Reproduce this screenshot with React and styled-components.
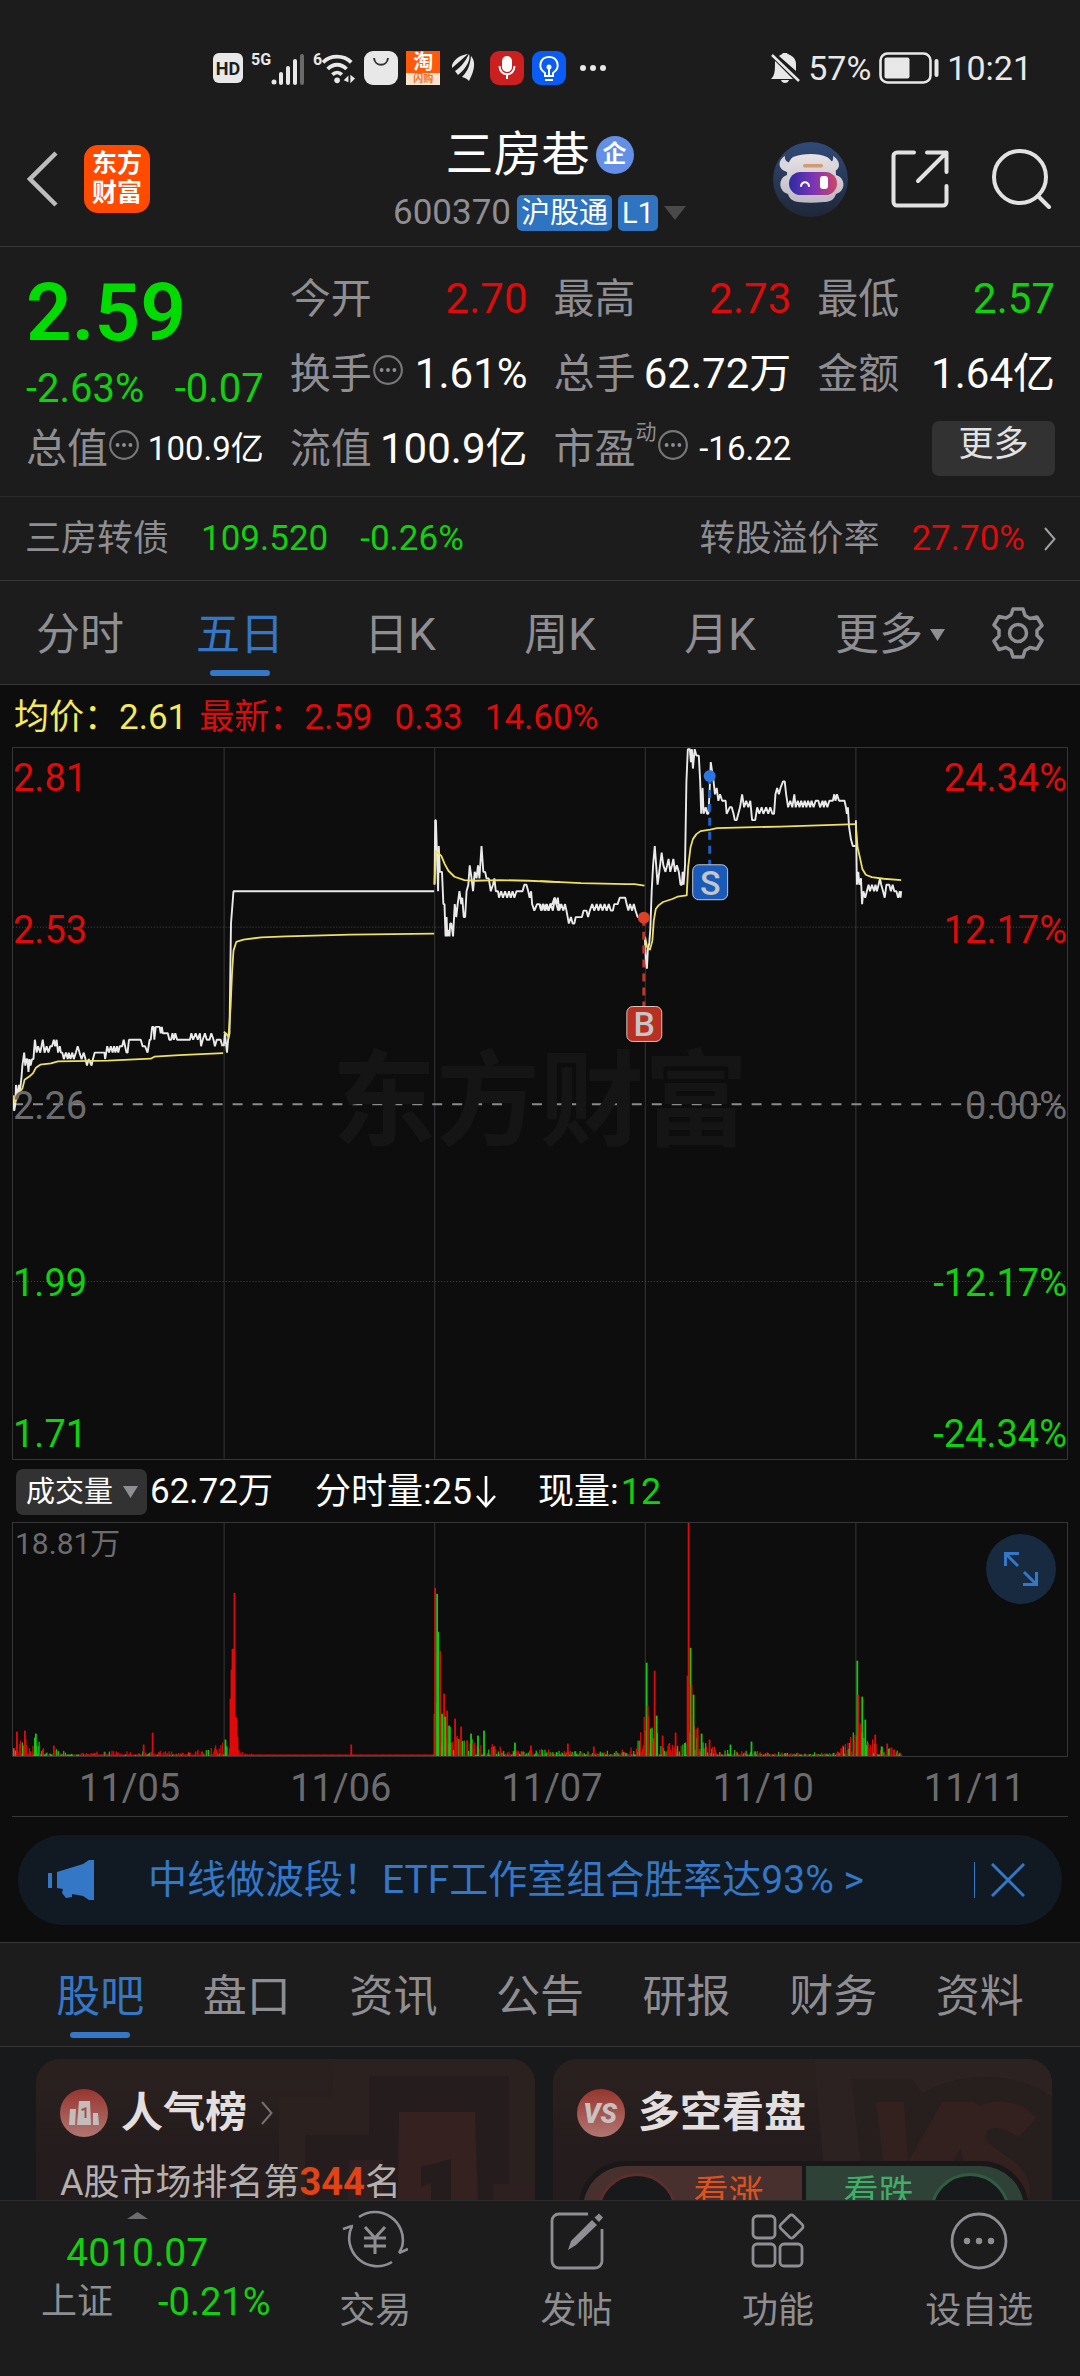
import React from 'react';
import styled, { createGlobalStyle } from 'styled-components';

const c = {
  bg: '#1c1c1c',
  chart: '#0d0d0d',
  line: '#363638',
  red: '#dd0b0b',
  green: '#10d010',
  grey: '#8e8e93',
  dim: '#6c6c6e',
  blue: '#3477c6',
  yellow: '#f6ea5c',
  light: '#e2e2e2',
};

const Global = createGlobalStyle`
  * { box-sizing: border-box; }
  html, body { margin: 0; background: ${c.bg}; }
  body {
    font-family: Roboto, "Noto Sans CJK SC", sans-serif;
    color: #fff;
  }
  button, select {
    font: inherit;
    color: inherit;
    background: none;
    border: 0;
    padding: 0;
    cursor: pointer;
  }
  a { color: inherit; text-decoration: none; }
  h1, h2, p, dl, dd, dt, ul { margin: 0; padding: 0; font-weight: 400; }
  svg { display: block; flex: none; }
`;

const Page = styled.div`
  height: 100vh;
  display: flex;
  flex-direction: column;
  background: ${c.bg};
  overflow: hidden;
`;

/* ---------- status bar ---------- */

const StatusBar = styled.div`
  flex: none;
  height: 118px;
  padding: 18px 48px 0 213px;
  display: flex;
  align-items: center;
  justify-content: space-between;
  color: #e8e8e8;
`;
const StatusGroup = styled.div`
  display: flex;
  align-items: center;
  gap: ${(p) => p.$gap}px;
  font-size: 34px;
  line-height: 40px;
`;
const HdBadge = styled.span`
  width: 30px;
  height: 30px;
  border-radius: 6px;
  background: #e8e8e8;
  color: ${c.bg};
  font-size: 18px;
  line-height: 31px;
  font-weight: 700;
  text-align: center;
`;
const Signal = styled.span`
  display: flex;
  align-items: flex-start;
  font-size: 16px;
  line-height: 16px;
  font-weight: 700;
  svg { margin-top: 1px; }
`;
const AppTile = styled.span`
  width: 34px;
  height: 34px;
  border-radius: ${(p) => p.$radius}px;
  background: ${(p) => p.$bg};
  display: flex;
  flex-direction: column;
  align-items: center;
  justify-content: center;
  overflow: hidden;
`;
const TileTop = styled.span`
  font-size: 20px;
  line-height: 22px;
  font-weight: 700;
  color: #fff;
`;
const TileFoot = styled.span`
  width: 100%;
  background: #fbe3cc;
  color: #f2701c;
  font-size: 10px;
  line-height: 12px;
  font-weight: 700;
  text-align: center;
`;

/* ---------- header ---------- */

const Header = styled.header`
  flex: none;
  display: grid;
  grid-template-columns: 1fr auto 1fr;
  align-items: center;
  padding: 9px 28px 15px 27px;
  border-bottom: 1px solid ${c.line};
`;
const HeaderSide = styled.div`
  display: flex;
  align-items: center;
  justify-content: ${(p) => (p.$end ? 'flex-end' : 'flex-start')};
  gap: ${(p) => (p.$end ? 43 : 26)}px;
`;
const IconButton = styled.button`
  display: flex;
  align-items: center;
  justify-content: center;
`;
const Logo = styled.a`
  width: 66px;
  height: 68px;
  border-radius: 14px;
  background: #ff4a00;
  color: #fff;
  font-size: 25px;
  line-height: 29px;
  font-weight: 700;
  text-align: center;
  padding-top: 4px;
`;
const HeaderMiddle = styled.div`
  display: flex;
  flex-direction: column;
  align-items: center;
  gap: 12px;
`;
const TitleRow = styled.div`
  display: flex;
  align-items: center;
  gap: 6px;
  height: 56px;
`;
const StockName = styled.h1`
  font-size: 48px;
  line-height: 56px;
`;
const CorpBadge = styled.span`
  width: 38px;
  height: 38px;
  border-radius: 50%;
  background: #6390e6;
  font-size: 24px;
  line-height: 36px;
  font-weight: 700;
  text-align: center;
`;
const CodeRow = styled.div`
  display: flex;
  align-items: center;
  gap: 6px;
  color: ${c.grey};
  font-size: 35px;
  line-height: 36px;
`;
const Tag = styled.span`
  height: 36px;
  padding: 0 4px;
  border-radius: 5px;
  background: #2f74c0;
  color: #fff;
  font-size: 29px;
  line-height: 36px;
`;

/* ---------- quote ---------- */

const Quote = styled.section`
  flex: none;
  display: grid;
  grid-template-columns: repeat(4, 1fr);
  grid-template-rows: repeat(3, 75px);
  column-gap: 26px;
  padding: 14px 25px 10px 26px;
  border-bottom: 1px solid #2a2a2c;
`;
const PriceCell = styled.div`
  grid-row: 1 / span 2;
  display: flex;
  flex-direction: column;
  justify-content: space-between;
  color: ${c.green};
`;
const Price = styled.strong`
  color: #00dc00;
  font-size: 80px;
  line-height: 104px;
  font-weight: 600;
`;
const Change = styled.div`
  display: flex;
  justify-content: space-between;
  font-size: 40px;
  line-height: 44px;
`;
const Stat = styled.div`
  display: flex;
  align-items: center;
  justify-content: space-between;
  line-height: 50px;
  white-space: nowrap;
`;
const StatName = styled.span`
  display: flex;
  align-items: center;
  color: ${c.grey};
  font-size: 41px;
  svg { margin-bottom: 8px; }
`;
const StatValue = styled.span`
  color: ${(p) => p.$color || '#fff'};
  font-size: ${(p) => (p.$small ? 33 : 42)}px;
`;
const Sup = styled.sup`
  align-self: flex-start;
  margin-top: -4px;
  font-size: 21px;
  line-height: 24px;
`;
const MoreButton = styled.button`
  justify-self: end;
  align-self: center;
  width: 123px;
  height: 55px;
  padding-bottom: 7px;
  border-radius: 7px;
  background: #323232;
  color: ${c.light};
  font-size: 35px;
  line-height: 48px;
`;

const BondRow = styled.a`
  flex: none;
  height: 84px;
  display: flex;
  align-items: center;
  gap: 32px;
  padding: 0 24px 0 25px;
  border-bottom: 1px solid ${c.line};
  font-size: 36px;
  line-height: 44px;
  color: ${c.grey};
`;
const Figure = styled.span`
  color: ${(p) => p.$color};
  font-size: 35px;
`;
const Tone = styled.span`
  color: ${(p) => p.$color};
`;
const Push = styled.span`
  margin-left: auto;
`;
const BondEnd = styled.span`
  display: flex;
  align-items: center;
  gap: 19px;
  color: ${c.red};
  font-size: 35px;
`;

/* ---------- tabs ---------- */

const Tabs = styled.nav`
  flex: none;
  display: flex;
  height: ${(p) => p.$height}px;
  padding: 0 ${(p) => p.$pad}px;
  border-bottom: 1px solid ${c.line};
`;
const Tab = styled.button`
  flex: ${(p) => p.$grow || 160} 1 0;
  display: flex;
  flex-direction: column;
  align-items: center;
  justify-content: flex-end;
  gap: 5px;
  padding-bottom: 8px;
  font-size: 44px;
  line-height: 60px;
  color: ${(p) => (p.$on ? c.blue : c.grey)};
  &::after {
    content: '';
    width: 60px;
    height: 6px;
    border-radius: 3px;
    background: ${(p) => (p.$on ? c.blue : 'transparent')};
  }
`;
const TabText = styled.span`
  display: flex;
  align-items: center;
  gap: 7px;
`;
const GearButton = styled(IconButton)`
  flex: none;
  width: 100px;
  padding-right: 24px;
`;

/* ---------- charts ---------- */

const Charts = styled.section`
  flex: none;
  background: ${c.chart};
  padding: 0 12px;
`;
const Legend = styled.div`
  display: flex;
  align-items: center;
  height: 62px;
  font-size: 35px;
  line-height: 44px;
  padding: 4px 2px 0;
  gap: 12px;
`;
const LegendPart = styled.span`
  display: flex;
  gap: 22px;
  color: ${(p) => p.$color};
`;
const Plot = styled.div`
  position: relative;
  border: 1px solid ${c.line};
`;
const PlotSvg = styled.svg`
  width: 100%;
  height: auto;
`;
const AxisLabel = styled.span`
  position: absolute;
  top: ${(p) => p.$top}%;
  ${(p) => (p.$right ? 'right: 0' : 'left: 0')};
  margin-top: -22px;
  font-size: 38px;
  line-height: 44px;
  color: ${(p) => p.$color};
`;
const Watermark = styled.span`
  position: absolute;
  top: 50%;
  left: 0;
  right: 0;
  margin-top: -60px;
  text-align: center;
  font-size: 104px;
  line-height: 120px;
  font-weight: 700;
  color: #151515;
`;
const VolumeBar = styled.div`
  display: flex;
  align-items: center;
  height: 62px;
  padding: 2px 0 0 4px;
  font-size: 36px;
  line-height: 46px;
`;
const Picker = styled.label`
  position: relative;
  display: flex;
  margin-right: 3px;
  svg {
    position: absolute;
    right: 9px;
    top: 17px;
    pointer-events: none;
  }
`;
const PickerSelect = styled.select`
  appearance: none;
  width: 131px;
  height: 46px;
  padding-left: 10px;
  border-radius: 7px;
  background: #323232;
  font-size: 29px;
`;
const VolumeItem = styled.span`
  margin-right: 42px;
  display: flex;
  align-items: center;
  gap: 2px;
`;
const Total = styled(VolumeItem)`
  font-size: 35px;
`;
const PeakVolume = styled.span`
  position: absolute;
  left: 2px;
  top: 3px;
  font-size: 30px;
  line-height: 36px;
  color: ${c.dim};
`;
const ExpandButton = styled(IconButton)`
  position: absolute;
  right: 11px;
  top: 11px;
  width: 70px;
  height: 70px;
  border-radius: 50%;
  background: #172a40;
`;
const DatesWrap = styled.div`
  border-bottom: 1px solid ${c.line};
`;
const Dates = styled.div`
  display: grid;
  grid-template-columns: repeat(5, 1fr);
  height: 59px;
  margin: 0 -12px 0 12px;
  padding-top: 5px;
  font-size: 38px;
  line-height: 52px;
  text-align: center;
  color: ${c.dim};
`;
const BannerWrap = styled.div`
  flex: none;
  background: ${c.chart};
  padding: 18px 18px 17px;
  border-bottom: 1px solid ${c.line};
`;
const Banner = styled.div`
  height: 90px;
  border-radius: 45px;
  background: #111a22;
  color: ${c.blue};
  display: flex;
  align-items: center;
  padding: 0 37px 0 30px;
  font-size: 39px;
  line-height: 48px;
`;
const BannerLink = styled.a`
  flex: 1;
  margin-left: 54px;
  white-space: nowrap;
`;
const CloseButton = styled(IconButton)`
  border-left: 1px solid ${c.blue};
  padding-left: 16px;
  height: 36px;
`;

/* ---------- cards ---------- */

const Cards = styled.section`
  flex: 1;
  min-height: 0;
  overflow: hidden;
  background: #18191b;
  display: grid;
  grid-template-columns: 1fr 1fr;
  gap: 18px;
  align-items: start;
  padding: 12px 28px 0 36px;
`;
const Card = styled.article`
  position: relative;
  height: 260px;
  border-radius: 24px;
  background: linear-gradient(#2a211f, #241c1d 40%, #241c1d);
  padding: 26px 24px;
  overflow: hidden;
`;
const CardArt = styled.svg`
  position: absolute;
  right: 0;
  top: 0;
`;
const CardHead = styled.div`
  position: relative;
  display: flex;
  align-items: center;
  gap: 13px;
  height: 56px;
`;
const CardTitle = styled.h2`
  font-size: 42px;
  line-height: 56px;
  font-weight: 700;
  color: #e3dfdf;
`;
const CardText = styled.p`
  position: relative;
  margin-top: 23px;
  font-size: 36px;
  line-height: 36px;
  color: #b5b0b0;
  b { color: #e04416; font-size: 38px; }
`;
const Versus = styled.div`
  position: relative;
  margin: 20px 0 0 1px;
  width: 451px;
  max-width: 100%;
  height: 96px;
  border: 5px solid #1a1718;
  border-radius: 48px;
  background: #1a1718;
  display: flex;
  gap: 4px;
  overflow: hidden;
`;
const Side = styled.button`
  flex: 1;
  display: flex;
  align-items: flex-start;
  justify-content: space-between;
  flex-direction: ${(p) => (p.$flip ? 'row-reverse' : 'row')};
  padding: 7px ${(p) => (p.$flip ? 14 : 38)}px 0 ${(p) => (p.$flip ? 38 : 14)}px;
  background: ${(p) => p.$bg};
  color: ${(p) => p.$color};
  font-size: 35px;
  line-height: 42px;
  &::before {
    content: '';
    width: 74px;
    height: 74px;
    border-radius: 50%;
    background: #18191b;
    border: 3px solid ${(p) => p.$ring};
  }
`;

/* ---------- bottom bar ---------- */

const BottomBar = styled.nav`
  flex: none;
  display: flex;
  height: 176px;
  border-top: 1px solid #2c2c2e;
  background: ${c.bg};
`;
const IndexCell = styled.a`
  flex: 274 1 0;
  display: flex;
  flex-direction: column;
  align-items: center;
  padding-top: 11px;
  color: ${c.green};
  font-size: 39px;
  line-height: 49px;
`;
const IndexValue = styled.span`
  margin-top: 10px;
`;
const IndexRow = styled.span`
  align-self: stretch;
  display: flex;
  justify-content: space-between;
  padding: 0 4px 0 41px;
  font-size: 38px;
  span { color: ${c.grey}; font-size: 36px; }
`;
const NavItem = styled.button`
  flex: 201 1 0;
  display: flex;
  flex-direction: column;
  align-items: center;
  gap: 17px;
  padding-top: 9px;
  color: ${c.grey};
  font-size: 36px;
  line-height: 48px;
`;

/* ---------- data ---------- */

const CHART_W = 1056;
const CHART_H = 712;
const TICK = 6.47;

// Each entry is "x:price" with the price in cents above the previous close of 2.26.
const priceEarly = [
  '33:1 37:-1 40:0 42:3 46:1 50:3 53:2 57:4 60:6 65:8 68:6 71:7 74:7 77:5 80:7 83:6 87:7 91:7 95:10 100:8 104:9 110:8 117:10 122:8 128:9 133:8 138:9 143:9 148:10 152:9 156:10 160:8 165:9 168:8 172:8 176:7 182:8 187:7 190:8 195:7 200:8 204:7 210:8 215:9 220:8 226:7 232:8 237:7 241:6 246:7 254:6 258:7 263:8 290:8 292:7 298:9 303:8 308:9 313:8 317:9 321:8 325:9 329:8 333:9 340:9 344:10 348:9 352:8 355:8 359:10 392:10 397:9 404:9 411:8 417:10 420:10 424:12 428:12 430:10 434:12 445:12 448:11 451:12 454:11 468:11 472:10 477:10 481:11 485:10 489:11 494:10 530:10 534:11 539:10 546:11 552:10 558:11 561:9 566:10 572:11 577:10 585:10 590:11 596:10 600:9 605:10 612:10 616:10 621:9',
  '625:9 628:11 634:8 637:10 641:11 645:28 652:33 1215:33',
  '1216:34 1218:44 1220:44 1226:33 1228:40 1231:36 1237:36 1241:31 1244:31 1247:26 1250:29 1252:26 1255:27 1258:26 1260:28 1263:28 1268:26 1273:31 1277:29 1281:31 1286:33 1291:31 1294:32 1298:29 1302:29 1306:33 1311:34 1315:37 1320:35 1324:33 1329:36 1334:35 1338:37 1342:35 1348:40 1353:36 1358:36 1362:35 1368:35 1374:33 1380:34 1384:35 1388:33 1394:33 1397:32 1403:33 1408:32 1414:33 1420:32 1425:33 1430:32 1435:33 1440:32 1446:33 1463:33 1468:34 1474:34 1479:33 1483:32 1487:33 1490:31 1496:30 1504:31 1510:31 1515:30 1520:31 1525:30 1530:31 1536:30 1542:31 1548:30 1554:32 1558:31 1563:30 1568:31',
];
const priceLate = [
  '0:31 5:30 10:31 16:30 20:31 24:30 30:31 36:31 42:32 48:31 52:32 56:30 62:31 68:30 73:31 77:30 84:28 90:29 95:28 100:28 104:29 122:29 127:30 135:30 140:29 145:30 152:31 158:30 165:31 170:30 176:31 182:30 188:31 194:30 200:31 206:30 212:30 216:31 226:31 232:32 248:32 252:31 257:30 262:31 268:30 273:31 278:30 284:29 304:29',
  '305:26 308:22 311:21 314:24 318:25 321:27 325:33 329:37 334:40 338:37 342:34 347:36 354:39 359:37 365:36 370:37 374:38 379:36 384:37 388:38 393:36 398:37 404:36 409:34 413:34 415:36 418:34 422:37 426:50 430:55 436:55 439:53 442:55 445:52 450:55 455:54 462:54 466:50 469:45 473:49 476:45 482:46 486:45 490:45 493:48 497:53 502:51 505:50 509:48 514:49 519:47 524:48 530:47 540:47 543:45 552:46 558:46 563:45 567:44 572:44 577:45 582:46 588:48 594:46 600:47 606:46 612:47 617:44 626:44 632:46 638:45 645:46 650:45 658:46 664:45 670:46 676:45 681:45 685:48 690:49 695:48 700:49 707:50 712:50 716:48 722:46 728:47 734:46 740:48 744:46 750:47 755:46 760:47 765:46 770:47 775:46 780:47 786:46 790:47 796:46 802:47 810:47 815:46 822:47 826:46 830:47 836:46 842:47 852:47 856:48 860:47 864:48 870:47 886:47 890:46 893:45 896:46 899:43 905:41 910:40 918:40',
  '919:44 922:34 926:36 929:34 934:35 937:31 941:33 946:32 951:33 956:34 960:33 966:34 972:33 976:34 980:33 985:34 989:35 993:34 998:33 1003:32 1008:34 1016:34 1021:33 1026:34 1031:33 1037:33 1042:32 1047:33 1049:32 1051:33',
];
const avgEarly = [
  '35,1065 40,1085 50,1056 60,1045 66,1018 80,1008 90,998 98,982 110,973 140,969 160,963 300,961 420,955 430,949 500,944 623,938',
  '625,874 632,880 638,890 644,800 648,700 652,630 660,604 680,597 730,590 800,587 980,582 1215,579',
  '1216,430 1220,330 1235,345 1245,370 1255,390 1272,408 1300,418 1330,420 1400,418 1480,420 1568,424',
];
const avgLate = [
  '0,421 120,427 250,430 275,430 304,435',
  '306,590 312,620 320,627 327,600 331,540 337,505 345,494 358,484 385,475 400,468 427,464 431,380 438,320 445,295 455,280 467,271 495,266 515,262 700,257 918,250',
  '919,255 924,320 932,355 938,385 948,402 965,409 1000,414 1051,418',
];
const earlyX = (u) => u / 2.8 - 12;
const lateX = (u) => u / 2.904 + 528;

const pricePoints = (text, toX) =>
  text
    .split(' ')
    .map((p) => p.split(':').map(Number))
    .map(([x, t]) => `${toX(x).toFixed(1)},${(357 - t * TICK).toFixed(1)}`)
    .join(' ');
const avgPoints = (text, toX) =>
  text
    .split(' ')
    .map((p) => p.split(',').map(Number))
    .map(([x, y]) => `${toX(x).toFixed(1)},${(y / 3 - 7).toFixed(1)}`)
    .join(' ');

const priceLines = [
  ...priceEarly.map((t) => pricePoints(t, earlyX)),
  ...priceLate.map((t) => pricePoints(t, lateX)),
];
const avgLines = [
  ...avgEarly.map((t) => avgPoints(t, earlyX)),
  ...avgLate.map((t) => avgPoints(t, lateX)),
];

const dayLines = [211, 422, 633, 844];

// Upper bound of ordinary minute volume, as [x, height].
const envelope = [
  [0, 14], [12, 18], [24, 16], [36, 9], [60, 4], [100, 6], [120, 5], [145, 7], [170, 4], [195, 9],
  [208, 14], [215, 16], [228, 8], [240, 3], [300, 1], [420, 1], [421, 80], [430, 50], [440, 24],
  [470, 17], [485, 12], [500, 6], [520, 9], [560, 6], [600, 6], [622, 12], [634, 50], [648, 20],
  [660, 12], [672, 18], [676, 70], [684, 30], [695, 16], [706, 7], [740, 6], [790, 4], [825, 5],
  [836, 18], [844, 50], [854, 26], [866, 12], [880, 10], [891, 6],
];
const bound = (x) => {
  const i = envelope.findIndex(([ex]) => ex >= x);
  if (i <= 0) return envelope[0][1];
  const [x0, h0] = envelope[i - 1];
  const [x1, h1] = envelope[i];
  return h0 + ((h1 - h0) * (x - x0)) / (x1 - x0);
};
const noise = (n) => {
  const v = Math.sin(n * 127.1 + 11.7) * 43758.5453;
  return v - Math.floor(v);
};
const minuteBars = Array.from({ length: 1012 }, (_, i) => {
  const x = i * 0.88;
  const h = Math.max(2, bound(x) * noise(i) ** 1.5);
  const greenShare = x < 60 ? 0.4 : x < 205 ? 0.15 : x < 214 ? 0.5 : x < 421 ? 0 : 0.42;
  return { x, h, up: noise(i + 5000) >= greenShare };
});
const peaks = [
  [3, 25, 1], [11, 26, 1], [21, 19, 0], [22, 23, 0], [40, 11, 1], [130, 12, 1], [139, 24, 1], [212, 17, 0],
  [217, 58, 1], [218, 87, 1], [219, 108, 1], [220, 108, 1], [221, 164, 1], [222, 40, 1], [223, 39, 1], [224, 20, 1], [338, 12, 1],
  [422, 169, 1], [424, 163, 0], [425, 125, 0], [427, 106, 1], [429, 43, 0], [431, 63, 1], [432, 40, 0], [434, 46, 1],
  [436, 31, 0], [442, 38, 1], [448, 30, 1], [458, 23, 0], [465, 21, 0], [471, 26, 0], [502, 14, 0],
  [518, 11, 1], [555, 13, 1], [581, 10, 1], [634, 94, 0], [635, 51, 1], [638, 28, 0], [642, 86, 1],
  [644, 41, 0], [650, 21, 1], [663, 24, 1], [675, 81, 1], [676, 234, 1], [678, 109, 0], [679, 72, 1],
  [681, 62, 0], [685, 29, 1], [689, 23, 0], [697, 17, 1], [718, 12, 0], [739, 15, 0], [845, 96, 0],
  [846, 62, 1], [850, 60, 0], [853, 37, 0], [863, 22, 1], [875, 13, 1],
].map(([x, h, up]) => ({ x, h, up }));

const priceLabels = [
  ['2.81', '24.34%', 4.2, c.red],
  ['2.53', '12.17%', 25.6, c.red],
  ['2.26', '0.00%', 50.4, c.dim],
  ['1.99', '-12.17%', 75.3, c.green],
  ['1.71', '-24.34%', 96.5, c.green],
];

/* ---------- drawings ---------- */

const Caret = ({ w = 22, h = 14, color = '#4a4a4c', up }) => (
  <svg width={w} height={h} viewBox="0 0 22 14" preserveAspectRatio="none">
    <path d={up ? 'M0 14h22L11 0z' : 'M0 0h22L11 14z'} fill={color} />
  </svg>
);
const Chevron = ({ w, h, color }) => (
  <svg width={w} height={h} viewBox="0 0 12 24" fill="none" stroke={color} strokeWidth="2">
    <path d="M1 1l9.500 11L1 23" />
  </svg>
);
const MoreDots = () => (
  <svg width="32" height="32" viewBox="0 0 30 30" fill={c.grey}>
    <circle cx="15" cy="15" r="13" fill="none" stroke="#77777a" strokeWidth="2" />
    <circle cx="9" cy="15" r="1.800" />
    <circle cx="15" cy="15" r="1.800" />
    <circle cx="21" cy="15" r="1.800" />
  </svg>
);
const Robot = () => (
  <svg width="75" height="75" viewBox="0 0 75 75">
    <defs>
      <linearGradient id="sky" x1="0" y1="0" x2="0" y2="1">
        <stop offset="0" stopColor="#314a78" />
        <stop offset="1" stopColor="#1f2738" />
      </linearGradient>
      <linearGradient id="shell" x1="0" y1="0" x2="0" y2="1">
        <stop offset="0" stopColor="#e6e2e6" />
        <stop offset="1" stopColor="#bdb8c2" />
      </linearGradient>
      <linearGradient id="visor">
        <stop offset="0" stopColor="#2d2aa4" />
        <stop offset=".5" stopColor="#7a35b4" />
        <stop offset="1" stopColor="#cf4468" />
      </linearGradient>
    </defs>
    <circle cx="37.500" cy="37.500" r="37.500" fill="url(#sky)" />
    <path d="M12 14c-7 4-8 13 2 16l8-9c-6 1-11-2-10-7zM60 14c7 4 9 13 0 16l-8-9c6 1 9-2 8-7z" fill="#dad7dc" />
    <path d="M20 15c10-4 26-4 34 0 6 4 9 10 9 18 10 3 10 16 0 19-2 6-6 8-12 8-9 1-18 1-26 0-6-1-9-4-10-8-10-3-10-16-1-19 0-8 1-14 6-18z" fill="url(#shell)" />
    <rect x="16" y="30" width="48" height="23" rx="11.500" fill="url(#visor)" />
    <rect x="30" y="22" width="20" height="3.500" rx="1.700" fill="#d49a6c" />
    <path d="M28 44c1-5 7-5 8 0" fill="none" stroke="#fff" strokeWidth="2" strokeLinecap="round" />
    <rect x="47" y="34" width="8" height="13" rx="3" fill="#fff" />
  </svg>
);
const Share = () => (
  <svg width="58" height="58" viewBox="0 0 58 58" fill="none" stroke={c.light} strokeWidth="4" strokeLinecap="round" strokeLinejoin="round">
    <path d="M23 2.500H6a3.500 3.500 0 0 0-3.500 3.500v46A3.500 3.500 0 0 0 6 55.500h46a3.500 3.500 0 0 0 3.500-3.500V36M36 2.500h19.500V22M54 4L27 31" />
  </svg>
);
const Search = () => (
  <svg width="60" height="60" viewBox="0 0 60 60" fill="none" stroke={c.light} strokeWidth="4" strokeLinecap="round">
    <circle cx="28" cy="28" r="26" />
    <path d="M46 47l11 11" />
  </svg>
);
const Gear = () => (
  <svg width="52" height="52" viewBox="0 0 52 52" fill="none" stroke={c.grey} strokeWidth="3.500" strokeLinejoin="round">
    <path d="M21 2h10l2 6.500 5 3 7-1.500 5 8.500-5 5v5l5 5-5 8.500-7-1.500-5 3-2 6.500H21l-2-6.500-5-3L7 42.500 2 34l5-5v-6l-5-5 5-8.500 7 1.500 5-3z" />
    <circle cx="26" cy="26" r="8.500" />
  </svg>
);
const Yuan = () => (
  <svg width="66" height="60" viewBox="0 0 66 60" fill="none" stroke={c.grey} strokeWidth="2.600">
    <path d="M17 7A28 28 0 0 1 60 37M60 37l-3 6M57 43l9-4M50 52A28 28 0 0 1 10 16M10 16L1 19M10 16l1 0" />
    <path d="M23 17l10 11 10-11M22 28h22M22 36h22M33 28v16" strokeWidth="3" />
  </svg>
);
const Compose = () => (
  <svg width="54" height="60" viewBox="0 0 54 60" fill="none" stroke={c.grey} strokeWidth="2.800">
    <path d="M38 4H9a7 7 0 0 0-7 7v40a7 7 0 0 0 7 7h36a7 7 0 0 0 7-7V19" />
    <path d="M18 40l3-9 21-21 5 5-21 20zM44.500 7.500L49 3.500l4 4-4 4.500z" fill={c.grey} stroke="none" />
  </svg>
);
const Grid = () => (
  <svg width="54" height="60" viewBox="0 0 54 60" fill="none" stroke={c.grey} strokeWidth="2.800">
    <rect x="2" y="6" width="22" height="22" rx="4" />
    <rect x="2" y="34" width="22" height="22" rx="4" />
    <rect x="29" y="34" width="22" height="22" rx="4" />
    <rect x="31.500" y="7.500" width="18" height="18" rx="3" transform="rotate(45 40.500 16.500)" />
  </svg>
);
const Circled = () => (
  <svg width="58" height="60" viewBox="0 0 58 60" fill={c.grey}>
    <circle cx="29" cy="31" r="27" fill="none" stroke={c.grey} strokeWidth="2.800" />
    <circle cx="17" cy="31" r="3.200" />
    <circle cx="29" cy="31" r="3.200" />
    <circle cx="41" cy="31" r="3.200" />
  </svg>
);
const Horn = () => (
  <svg width="46" height="40" viewBox="0 0 46 40" fill={c.blue}>
    <path d="M0 13h4v15H0zM9 12L35 4l6-4h5v40h-5l-6-4-11-2v3l-6 1-4-5 1-4-6-1z" />
  </svg>
);

const PriceChart = () => (
  <Plot>
    <Watermark>东方财富</Watermark>
    <PlotSvg viewBox={`0 0 ${CHART_W} ${CHART_H}`} fill="none">
      {dayLines.map((x) => (
        <path key={x} d={`M${x}.500 0V${CHART_H}`} stroke={c.line} />
      ))}
      <path d={`M0 179.500H${CHART_W}M0 534.500H${CHART_W}`} stroke="#4a4a4c" strokeDasharray="1 2" />
      <path d={`M0 357H${CHART_W}`} stroke="#8a8a8c" strokeWidth="2" strokeDasharray="10 10" />
      {priceLines.map((p, i) => (
        <polyline key={i} points={p} stroke="#eaeaea" strokeWidth="1.900" strokeLinejoin="bevel" />
      ))}
      {avgLines.map((p, i) => (
        <polyline key={i} points={p} stroke="#eee060" strokeWidth="1.800" strokeLinejoin="round" />
      ))}
      <path d="M698 28V117" stroke="#1f5fc0" strokeWidth="3" strokeDasharray="8 6" />
      <circle cx="698" cy="28" r="6" fill="#2b76e4" />
      <path d="M632 170V259" stroke="#b83a2c" strokeWidth="3" strokeDasharray="8 6" />
      <circle cx="632" cy="170" r="6" fill="#dc4028" />
      <rect x="681" y="117" width="35" height="35" rx="6" fill="#1a5ab8" stroke="#c0c8d4" />
      <rect x="615" y="259" width="35" height="35" rx="6" fill="#b93022" stroke="#d8c4c0" />
      <g fill="#c4c6ca" fontSize="34" fontWeight="500" textAnchor="middle" fontFamily="Roboto, sans-serif">
        <text x="698.500" y="147">S</text>
        <text x="632.500" y="289">B</text>
      </g>
    </PlotSvg>
    {priceLabels.map(([price, pct, top, color]) => (
      <React.Fragment key={price}>
        <AxisLabel $top={top} $color={color}>{price}</AxisLabel>
        <AxisLabel $top={top} $color={color} $right>{pct}</AxisLabel>
      </React.Fragment>
    ))}
  </Plot>
);

const VolumeChart = () => (
  <Plot>
    <PlotSvg viewBox={`0 0 ${CHART_W} 234`}>
      {dayLines.map((x) => (
        <path key={x} d={`M${x}.500 0V234`} stroke={c.line} />
      ))}
      {minuteBars.map((b, i) => (
        <rect key={i} x={b.x} y={234 - b.h} width="1.200" height={b.h} fill={b.up ? '#e00a0a' : '#14c814'} />
      ))}
      {peaks.map((b, i) => (
        <rect key={i} x={b.x} y={234 - b.h} width="1.800" height={b.h} fill={b.up ? '#e00a0a' : '#14c814'} />
      ))}
    </PlotSvg>
    <PeakVolume>18.81万</PeakVolume>
    <ExpandButton aria-label="放大">
      <svg width="36" height="36" viewBox="0 0 36 36" fill="none" stroke={c.blue} strokeWidth="3">
        <path d="M2.500 15V2.500H16M3 3l12 12M33.500 21v12.500H20M33 33L21 21" />
      </svg>
    </ExpandButton>
  </Plot>
);

const dayTabs = ['分时', '五日', '日K', '周K', '月K'];
const infoTabs = ['股吧', '盘口', '资讯', '公告', '研报', '财务', '资料'];
const actions = [
  ['交易', Yuan],
  ['发帖', Compose],
  ['功能', Grid],
  ['设自选', Circled],
];

export default function App() {
  return (
    <Page>
      <Global />
      <StatusBar>
        <StatusGroup $gap={8}>
          <HdBadge>HD</HdBadge>
          <Signal>
            5G
            <svg width="34" height="32" viewBox="0 0 34 32" fill="#e8e8e8">
              <circle cx="3" cy="29" r="2.500" />
              <rect x="8" y="19" width="4" height="13" rx="2" />
              <rect x="15" y="13" width="4" height="19" rx="2" />
              <rect x="22" y="6" width="4" height="26" rx="2" />
              <rect x="29" y="1" width="4" height="31" rx="2" fill="#6a6a6a" />
            </svg>
          </Signal>
          <Signal>
            6
            <svg width="34" height="32" viewBox="0 0 36 32" fill="none" stroke="#e8e8e8" strokeWidth="4">
              <path d="M1 9c8-8 22-8 30 0M6 16c6-6 14-6 20 0M11 22c3-3 7-3 10 0" />
              <circle cx="16" cy="28" r="3" fill="#e8e8e8" stroke="none" />
              <path d="M23 28l5-5v7zM35 26l-5-4v9z" fill="#e8e8e8" stroke="none" />
            </svg>
          </Signal>
          <AppTile $radius={9} $bg="#e8e8e8">
            <svg width="34" height="34" fill="none" stroke="#333" strokeWidth="2">
              <path d="M10 7c1 9 13 9 14 0" />
            </svg>
          </AppTile>
          <AppTile $radius={0} $bg="#ff5a0a">
            <TileTop>淘</TileTop>
            <TileFoot>闪购</TileFoot>
          </AppTile>
          <svg width="34" height="30" viewBox="5 0 34 30" fill="#e8e8e8">
            <path d="M9 12C12 5 18 2 25 1 20 5 15 10 9 15zM12 18c6-4 10-9 14-17 2 5-2 14-11 21zM19 24c5-5 8-11 9-21 4 4 5 12-2 25-2-2-3-3-7-4z" />
          </svg>
          <AppTile $radius={9} $bg="#cc2020">
            <svg width="34" height="34" fill="none" stroke="#fff" strokeWidth="2">
              <rect x="13" y="6" width="8" height="14" rx="4" fill="#fff" />
              <path d="M9.500 15c0 11 15 11 15 0M17 23v5" />
            </svg>
          </AppTile>
          <AppTile $radius={9} $bg="#0a5cf5">
            <svg width="34" height="34" fill="none" stroke="#fff" strokeWidth="2">
              <path d="M13 25v-3c-8-5-5-16 4-16s12 11 4 16v3zM13 29h8M17 16v9" />
              <circle cx="17" cy="16" r="1.500" fill="#fff" />
            </svg>
          </AppTile>
          <svg width="40" height="8" viewBox="0 0 40 8" fill="#e8e8e8">
            <circle cx="9" cy="4" r="3" />
            <circle cx="19" cy="4" r="3" />
            <circle cx="29" cy="4" r="3" />
          </svg>
        </StatusGroup>
        <StatusGroup $gap={8}>
          <svg width="30" height="32" viewBox="0 0 30 32" fill="#e8e8e8">
            <path d="M9 4C11 2 12 3 13 1h4c0 2 10 2 9 13v5zM5 9l18 18H1c4-4 4-8 4-18zM11 28h8c-1 4-7 4-8 0z" />
            <path d="M2 3l27 26" stroke="#e8e8e8" strokeWidth="2.500" />
          </svg>
          <span>57%</span>
          <svg width="60" height="32" viewBox="0 0 60 32" fill="none" stroke="#e8e8e8" strokeWidth="2.600">
            <rect x="1.500" y="1.500" width="50" height="29" rx="7" />
            <rect x="5.500" y="5.500" width="25" height="21" rx="2" fill="#e8e8e8" stroke="none" />
            <path d="M57.500 9v14" strokeWidth="4" strokeLinecap="round" />
          </svg>
          <span>10:21</span>
        </StatusGroup>
      </StatusBar>

      <Header>
        <HeaderSide>
          <IconButton aria-label="返回">
            <svg width="31" height="56" viewBox="0 0 31 56" fill="none" stroke="#bdbdbd" strokeWidth="4.500">
              <path d="M29 2L3 28l26 26" />
            </svg>
          </IconButton>
          <Logo href="#">东方<br />财富</Logo>
        </HeaderSide>
        <HeaderMiddle>
          <TitleRow>
            <StockName>三房巷</StockName>
            <CorpBadge>企</CorpBadge>
          </TitleRow>
          <CodeRow>
            600370
            <Tag>沪股通</Tag>
            <Tag>L1</Tag>
            <Caret />
          </CodeRow>
        </HeaderMiddle>
        <HeaderSide $end>
          <IconButton aria-label="助手"><Robot /></IconButton>
          <IconButton aria-label="分享"><Share /></IconButton>
          <IconButton aria-label="搜索"><Search /></IconButton>
        </HeaderSide>
      </Header>

      <Quote>
        <PriceCell>
          <Price>2.59</Price>
          <Change><span>-2.63%</span><span>-0.07</span></Change>
        </PriceCell>
        <Stat><StatName>今开</StatName><StatValue $color={c.red}>2.70</StatValue></Stat>
        <Stat><StatName>最高</StatName><StatValue $color={c.red}>2.73</StatValue></Stat>
        <Stat><StatName>最低</StatName><StatValue $color={c.green}>2.57</StatValue></Stat>
        <Stat><StatName>换手<MoreDots /></StatName><StatValue>1.61%</StatValue></Stat>
        <Stat><StatName>总手</StatName><StatValue>62.72万</StatValue></Stat>
        <Stat><StatName>金额</StatName><StatValue>1.64亿</StatValue></Stat>
        <Stat><StatName>总值<MoreDots /></StatName><StatValue $small>100.9亿</StatValue></Stat>
        <Stat><StatName>流值</StatName><StatValue>100.9亿</StatValue></Stat>
        <Stat><StatName>市盈<Sup>动</Sup><MoreDots /></StatName><StatValue $small>-16.22</StatValue></Stat>
        <MoreButton>更多</MoreButton>
      </Quote>

      <BondRow href="#">
        <span>三房转债</span>
        <Figure $color={c.green}>109.520</Figure>
        <Figure $color={c.green}>-0.26%</Figure>
        <Push>转股溢价率</Push>
        <BondEnd>27.70%<Chevron w={12} h={24} color="#a0a0a4" /></BondEnd>
      </BondRow>

      <Tabs $height={104} $pad={0}>
        {dayTabs.map((t) => (
          <Tab key={t} $on={t === '五日'}>{t}</Tab>
        ))}
        <Tab $grow={180}>
          <TabText>更多<Caret w={15} h={12} color={c.grey} /></TabText>
        </Tab>
        <GearButton aria-label="设置"><Gear /></GearButton>
      </Tabs>

      <Charts>
        <Legend>
          <LegendPart $color={c.yellow}>均价：2.61</LegendPart>
          <LegendPart $color={c.red}>
            <span>最新：2.59</span>
            <span>0.33</span>
            <span>14.60%</span>
          </LegendPart>
        </Legend>
        <PriceChart />
        <VolumeBar>
          <Picker aria-label="指标">
            <PickerSelect defaultValue="vol">
              <option value="vol">成交量</option>
            </PickerSelect>
            <Caret w={15} h={12} color={c.grey} />
          </Picker>
          <Total>62.72万</Total>
          <VolumeItem>
            分时量:25
            <svg width="22" height="32" viewBox="0 0 22 32" fill="none" stroke="#fff" strokeWidth="2.600">
              <path d="M12 0v29M3 20l9 10 9-10" />
            </svg>
          </VolumeItem>
          <VolumeItem>现量:<Tone $color={c.green}>12</Tone></VolumeItem>
        </VolumeBar>
        <VolumeChart />
        <DatesWrap>
          <Dates>
            {['11/05', '11/06', '11/07', '11/10', '11/11'].map((d) => (
              <span key={d}>{d}</span>
            ))}
          </Dates>
        </DatesWrap>
      </Charts>

      <BannerWrap>
        <Banner>
          <Horn />
          <BannerLink href="#">中线做波段！ETF工作室组合胜率达93% &gt;</BannerLink>
          <CloseButton aria-label="关闭">
            <svg width="34" height="34" viewBox="0 0 34 34" stroke={c.blue} strokeWidth="3">
              <path d="M1 1l32 32M33 1L1 33" />
            </svg>
          </CloseButton>
        </Banner>
      </BannerWrap>

      <Tabs $height={104} $pad={27}>
        {infoTabs.map((t) => (
          <Tab key={t} $on={t === '股吧'}>{t}</Tab>
        ))}
      </Tabs>

      <Cards>
        <Card>
          <CardArt width="260" height="180" viewBox="0 0 260 180">
            <path d="M58 0h202v180H4V38h54z" fill="#2b2220" />
            <path d="M94 17h140v163H30V76h64z" fill="#251d1d" />
            <path d="M124 53h76l4 127h-82z" fill="#35211f" />
            <path d="M74 101h34v79H72zM218 125h42v55h-42z" fill="#2e2020" />
            <path d="M146 108l30-8v80h-20v-56l-10 4z" fill="#251d1d" />
          </CardArt>
          <CardHead>
            <svg width="48" height="48" viewBox="0 0 48 48">
              <defs>
                <linearGradient id="disc" x1="0" y1="0" x2="0" y2="1">
                  <stop offset="0" stopColor="#98352f" />
                  <stop offset="1" stopColor="#b07672" />
                </linearGradient>
              </defs>
              <circle cx="24" cy="24" r="24" fill="url(#disc)" />
              <path d="M10 20h6l-1 16H9zM19 12h11l1 24H17zM33 24h5l1 12h-6z" fill="#c4bcbb" />
              <path d="M21.500 21l4-1.500V29" fill="none" stroke="#a0504a" strokeWidth="2" />
            </svg>
            <CardTitle>人气榜</CardTitle>
            <Chevron w={14} h={24} color="#77706f" />
          </CardHead>
          <CardText>A股市场排名第<b>344</b>名</CardText>
        </Card>
        <Card>
          <CardArt width="260" height="180" viewBox="0 0 260 180">
            <path d="M22 0h238v180H38z" fill="#2b2221" />
            <path d="M60 20h60l10 14c40-24 100-20 130 4v142H76z" fill="#271e1e" />
            <path d="M84 43h28l4 60 34-60h32l6 4c16-8 40-6 56 12l-18 20c-18-16-34-10-32 0 4 14 40 20 44 50l-4 51h-36l-30-90-30 52H96z" fill="#33211f" />
          </CardArt>
          <CardHead>
            <svg width="48" height="48" viewBox="0 0 48 48">
              <circle cx="24" cy="24" r="24" fill="url(#disc)" />
              <text x="23" y="34" textAnchor="middle" fontSize="27" fontWeight="900" fontStyle="italic" fontFamily="Roboto, sans-serif" fill="#c9c1c0">VS</text>
            </svg>
            <CardTitle>多空看盘</CardTitle>
          </CardHead>
          <Versus>
            <Side $bg="#47302e" $ring="#5c2f2c" $color="#dd5220">看涨</Side>
            <Side $bg="#2f4237" $ring="#2f5c42" $color="#3fae66" $flip>看跌</Side>
          </Versus>
        </Card>
      </Cards>

      <BottomBar>
        <IndexCell href="#">
          <Caret w={21} h={7} color={c.dim} up />
          <IndexValue>4010.07</IndexValue>
          <IndexRow><span>上证</span>-0.21%</IndexRow>
        </IndexCell>
        {actions.map(([name, Icon]) => (
          <NavItem key={name}><Icon />{name}</NavItem>
        ))}
      </BottomBar>
    </Page>
  );
}
